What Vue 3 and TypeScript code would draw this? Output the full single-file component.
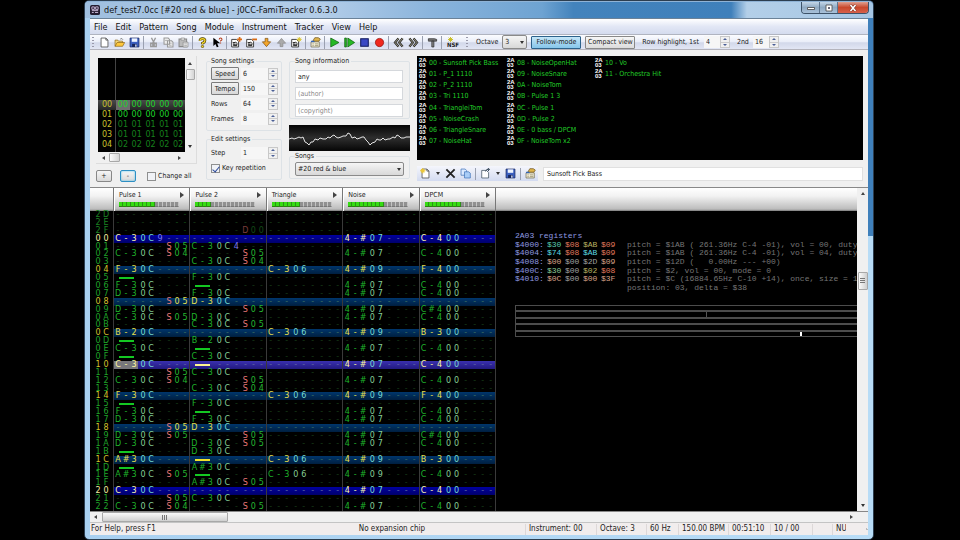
<script setup lang="ts">
import { ref } from 'vue'

interface Cell { note: string; inst: string; vol: string; fx: string }
interface Row { label: string; kind: string; cells: Cell[] }
interface Channel { name: string; level: number; data: Record<string, string> }

const menus = ['File', 'Edit', 'Pattern', 'Song', 'Module', 'Instrument', 'Tracker', 'View', 'Help']

const page = '<path d="M3 1.5h7l3 3v10H3z" fill="#fff" stroke="#333"/><path d="M10 1.5v3h3" fill="none" stroke="#333"/>'
const disk = '<path d="M1.5 1.5h13v13h-13z" fill="#3b5fc0" stroke="#16255c"/><path d="M4 2h8v5H4z" fill="#eef4ff"/><path d="M4.500 10h7v4.500h-7z" fill="#16255c"/><path d="M9 11h2v3H9z" fill="#dde6ff"/>'
const star = '<path d="M12 0v7M8.500 3.500h7M9.500 1l5 5M14.500 1l-5 5" stroke="#d8c020" stroke-width="1.300"/>'
const frame = '<path d="M1 3.500h7l3 3v8H1z" fill="#fff" stroke="#333" stroke-width="1.300"/><path d="M2.500 8h4M3 10.500h6M3 12.500h6" stroke="#222" stroke-width="1.300"/><circle cx="6.500" cy="10" r="2.500" fill="none" stroke="#222"/>'
const props = '<path d="M1.500 7h12v7.500h-12z" fill="#f5f1dc" stroke="#6b6346"/><path d="M4 6h9l2-3-3-2H7z" fill="#e0b54c" stroke="#6b4f14"/><path d="M1.500 6.500h5" stroke="#3567b8" stroke-width="2"/><path d="M3.500 10h2M7 10h5M3.500 12.500h2M7 12.500h5" stroke="#857b55"/>'

const icons: Record<string, string> = {
  new: page,
  open: '<path d="M1.500 13.500v-9h4l1 1.500h6v3" fill="#f4d77a" stroke="#8a6414"/><path d="M1.500 13.500l3-5.500h11l-3 5.500z" fill="#ffc83c" stroke="#8a6414"/><path d="M9 3q3-2 4 1" fill="none" stroke="#555"/>',
  save: disk,
  cut: '<path d="M5 1l4 8M11 1L7 9" stroke="#999" stroke-width="2"/><path d="M4 9h3v5H4zM9 9h3v5H9z" fill="none" stroke="#999" stroke-width="2"/>',
  copy: '<path d="M1.500 1.500h6l2 2v7h-8zM6.500 5.500h6l2 2v7h-8z" fill="#eee" stroke="#999" stroke-width="1.500"/><path d="M3 5h3M8.500 9h4M8.500 12h4" stroke="#999"/>',
  paste: '<path d="M1.500 3h11v11h-11z" fill="#bbb" stroke="#888" stroke-width="1.500"/><path d="M4.500 1.500h5v3h-5z" fill="#eee" stroke="#888"/><path d="M7.500 7.500h7v7h-7z" fill="#eee" stroke="#888"/><path d="M9 10h4M9 12.500h4" stroke="#999"/>',
  help: '<path d="M4.500 5.500Q4 2.500 8 2.500t3.500 3Q11.500 7.500 8 9v1.500" fill="none" stroke="#4a3b00" stroke-width="4"/><path d="M4.500 5.500Q4 2.500 8 2.500t3.500 3Q11.500 7.500 8 9v1.500" fill="none" stroke="#f5d92c" stroke-width="2"/><circle cx="8" cy="13.800" r="1.700" fill="#f5d92c" stroke="#4a3b00"/>',
  what: '<path d="M2 1v12l3-3 2 5 2.500-1-2-5H12z" fill="#000"/><path d="M10.500 3.500q0-2 2-2t2 2q0 1-2 2v1.200M12.500 8v1.300" fill="none" stroke="#b43c1c" stroke-width="1.500"/>',
  addFrame: frame + '<path d="M12.500 0v7M9 3.500h7" stroke="#d96a12" stroke-width="2.400"/>',
  delFrame: frame + '<path d="M9 3.500h7" stroke="#d96a12" stroke-width="2.600"/>',
  down: '<path d="M6 2h4v5h4l-6 7-6-7h4z" fill="#f3a62c" stroke="#7a4a08"/>',
  up: '<path d="M6 14h4V9h4L8 2 2 9h4z" fill="#aaa" stroke="#888"/>',
  dupFrame: frame + star,
  props,
  play: '<path d="M2.500 1.500v13l12-6.500z" fill="#25b825" stroke="#0a5c0a"/>',
  playLoop: '<path d="M1 1.500h2.500v13H1z" fill="#25b825" stroke="#0a5c0a"/><path d="M5.500 1.500v13l10-6.500z" fill="#25b825" stroke="#0a5c0a"/>',
  stop: '<path d="M2.500 2.500h11v11h-11z" fill="#3a48c4" stroke="#111a5c" stroke-width="1.500"/>',
  record: '<circle cx="8" cy="8" r="6" fill="#f0281e" stroke="#8c0c08"/>',
  prev: '<path d="M8 2L3 8l5 6M14 2L9 8l5 6" fill="none" stroke="#222" stroke-width="3.400"/><path d="M8 2L3 8l5 6M14 2L9 8l5 6" fill="none" stroke="#d8d2b0"/>',
  next: '<path d="M2 2l5 6-5 6M8 2l5 6-5 6" fill="none" stroke="#222" stroke-width="3.400"/><path d="M2 2l5 6-5 6M8 2l5 6-5 6" fill="none" stroke="#d8d2b0"/>',
  hammer: '<path d="M2 5V2.500h9l3 1V6H2z" fill="#777" stroke="#222"/><path d="M7 6h3v8.500H7z" fill="#888" stroke="#222"/>',
  newInst: page + '<path d="M4 0v8M0 4h8M1.500 1.500l5 5M6.500 1.500l-5 5" stroke="#ecc83a" stroke-width="1.500"/>',
  remove: '<path d="M2 2l12 12M14 2L2 14" stroke="#222" stroke-width="2.600"/>',
  clone: '<path d="M1.500 1.500h6l2 2v7h-8z" fill="#dceaff" stroke="#3b6fb5"/><path d="M6.500 5.500h6l2.500 2v7H6.500z" fill="#a9cdf7" stroke="#3b6fb5"/>',
  load: '<path d="M2.500 3.500h7l3 3v8h-10z" fill="#fff" stroke="#345"/><path d="M8 5q1-4 5-3M11 0l3 2-3 3" fill="none" stroke="#345" stroke-width="1.400"/>',
}

const toolGroups: string[][] = [
  ['new', 'open', 'save'],
  ['cut', 'copy', 'paste'],
  ['help', 'what'],
  ['addFrame', 'delFrame', 'down', 'up', 'dupFrame'],
  ['props'],
  ['play', 'playLoop', 'stop', 'record'],
  ['prev', 'next'],
  ['hammer'],
]

const frames = [
  ['00', '00'], ['01', '00'], ['02', '01'], ['03', '01'], ['04', '02'],
]

const settings = ref([
  { id: 'speed', label: 'Speed', value: '6', button: true },
  { id: 'tempo', label: 'Tempo', value: '150', button: true },
  { id: 'rows', label: 'Rows', value: '64', button: false },
  { id: 'frames', label: 'Frames', value: '8', button: false },
])
const step = ref('1')
const octave = ref('3')
const highlight1 = ref('4')
const highlight2 = ref('16')
const keyRepeat = ref(true)
const changeAll = ref(false)
const title = ref('any')
const author = ref('')
const copyright = ref('')
const instrumentName = ref('Sunsoft Pick Bass')
const song = ref('#20 red & blue')

const instruments = [
  '00 - Sunsoft Pick Bass', '01 - P_1 1110', '02 - P_2 1110', '03 - Tri 1110',
  '04 - TriangleiTom', '05 - NoiseCrash', '06 - TriangleSnare', '07 - NoiseHat',
  '08 - NoiseOpenHat', '09 - NoiseSnare', '0A - NoiseTom', '0B - Pulse 1 3',
  '0C - Pulse 1', '0D - Pulse 2', '0E - 0 bass / DPCM', '0F - NoiseTom x2',
  '10 - Vo', '11 - Orchestra Hit',
]

// Each entry is note, instrument, volume and effect, separated by blanks; "." leaves a field empty.
const channels: Channel[] = [
  { name: 'Pulse 1', level: 9, data: {
    '00': 'C-3 0C 9 .', '01': '. . . S05', '02': 'C-3 0C . S04', '04': 'F-3 0C . .', '05': '=== . . .',
    '06': 'F-3 0C . .', '07': 'D-3 0C . .', '08': '. . . S05', '09': 'D-3 0C . .', '0A': 'C-3 0C . S05',
    '0C': 'B-2 0C . .', '0D': '=== . . .', '0E': 'C-3 0C . .', '0F': '=== . . .', '10': 'C-3 0C . .',
    '11': '. . . S05', '12': 'C-3 0C . S04', '14': 'F-3 0C . .', '15': '=== . . .', '16': 'F-3 0C . .',
    '17': 'D-3 0C . .', '18': '. . . S05', '19': 'D-3 0C . S05', '1A': 'D-3 0C . .', '1B': '=== . . .',
    '1C': 'A#3 0C . .', '1D': '=== . . .', '1E': 'A#3 0C . S05', '20': 'C-3 0C . .', '21': '. . . S05',
    '22': 'C-3 0C . S04',
  } },
  { name: 'Pulse 2', level: 4, data: {
    '2F': '. . . D00', '01': 'C-3 0C 4 .', '02': '. . . S05', '03': 'C-3 0C . S04', '05': 'F-3 0C . .',
    '06': '=== . . .', '07': 'F-3 0C . .', '08': 'D-3 0C . .', '09': '. . . S05', '0A': 'D-3 0C . .',
    '0B': 'C-3 0C . S05', '0D': 'B-2 0C . .', '0E': '=== . . .', '0F': 'C-3 0C . .', '10': '=== . . .',
    '11': 'C-3 0C . .', '12': '. . . S05', '13': 'C-3 0C . S04', '15': 'F-3 0C . .', '16': '=== . . .',
    '17': 'F-3 0C . .', '18': 'D-3 0C . .', '19': '. . . S05', '1A': 'D-3 0C . S05', '1B': 'D-3 0C . .',
    '1C': '=== . . .', '1D': 'A#3 0C . .', '1E': '=== . . .', '1F': 'A#3 0C . S05', '21': 'C-3 0C . .',
    '22': '. . . S05',
  } },
  { name: 'Triangle', level: 7, data: {
    '04': 'C-3 06 . .', '0C': 'C-3 06 . .', '14': 'C-3 06 . .', '1C': 'C-3 06 . .', '1E': 'C-3 06 . .',
  } },
  { name: 'Noise', level: 9, data: {
    '00': '4-# 07 . .', '02': '4-# 07 . .', '04': '4-# 09 . .', '06': '4-# 07 . .', '07': '4-# 07 . .',
    '09': '4-# 07 . .', '0A': '4-# 07 . .', '0C': '4-# 09 . .', '0E': '4-# 07 . .', '10': '4-# 07 . .',
    '12': '4-# 07 . .', '14': '4-# 09 . .', '16': '4-# 07 . .', '17': '4-# 07 . .', '19': '4-# 07 . .',
    '1A': '4-# 07 . .', '1C': '4-# 09 . .', '1E': '4-# 09 . .', '20': '4-# 07 . .', '22': '4-# 07 . .',
  } },
  { name: 'DPCM', level: 9, data: {
    '00': 'C-4 00 . .', '02': 'C-4 00 . .', '04': 'F-4 00 . .', '06': 'C-4 00 . .', '07': 'C-4 00 . .',
    '09': 'C#4 00 . .', '0A': 'C-4 00 . .', '0C': 'B-3 00 . .', '0E': 'C-4 00 . .', '10': 'C-4 00 . .',
    '12': 'C-4 00 . .', '14': 'F-4 00 . .', '16': 'C-4 00 . .', '17': 'C-4 00 . .', '19': 'C#4 00 . .',
    '1A': 'C-4 00 . .', '1C': 'B-3 00 . .', '1E': 'C-4 00 . .', '20': 'C-4 00 . .', '22': 'C-4 00 . .',
  } },
]

const hex = (n: number): string => n.toString(16).toUpperCase().padStart(2, '0')

function parse(text: string | undefined): Cell {
  const [note, inst, vol, fx] = (text ?? '. . . .').split(' ').map(part => (part === '.' ? '' : part))
  return { note, inst, vol, fx }
}

function makeRow(n: number, previous: boolean): Row {
  const kind = previous ? 'past' : n === 16 ? 'cursor' : n % 16 === 0 ? 'bar' : n % 4 === 0 ? 'beat' : 'plain'
  return { label: hex(n), kind, cells: channels.map(channel => parse(channel.data[hex(n)])) }
}

const rows: Row[] = [
  ...[0x2d, 0x2e, 0x2f].map(n => makeRow(n, true)),
  ...Array.from({ length: 35 }, (_, n) => makeRow(n, false)),
]

const fields: { key: keyof Cell; size: number }[] = [
  { key: 'note', size: 3 }, { key: 'inst', size: 2 }, { key: 'vol', size: 1 }, { key: 'fx', size: 3 },
]

const registers = [
  { name: '$4000:', values: ['$30', '$08', '$AB', '$09'], tones: ['teal', 'red', 'olive', 'red'], info: 'pitch = $1AB ( 261.36Hz C-4 -01), vol = 00, duty = 0' },
  { name: '$4004:', values: ['$74', '$08', '$AB', '$09'], tones: ['cyan', 'red', 'cyan', 'red'], info: 'pitch = $1AB ( 261.36Hz C-4 -01), vol = 04, duty = 1' },
  { name: '$4008:', values: ['$00', '$00', '$2D', '$09'], tones: ['rose', 'gray', 'gray', 'rose'], info: 'pitch = $12D (   0.00Hz --- +00)' },
  { name: '$400C:', values: ['$30', '$00', '$02', '$08'], tones: ['green', 'gray', 'olive', 'red'], info: 'pitch = $2, vol = 00, mode = 0' },
  { name: '$4010:', values: ['$0C', '$00', '$00', '$3F'], tones: ['rose', 'gray', 'rose', 'rose'], info: 'pitch = $C (16884.65Hz C-10 +14), once, size = 1009' },
]

const noteBars = [
  { at: -1, strong: false }, { at: 55.6, strong: false }, { at: -1, strong: false },
  { at: -1, strong: false }, { at: 83.2, strong: true },
]

const status = [
  { text: 'Instrument: 00', size: 'w71' }, { text: 'Octave: 3', size: 'w50' }, { text: '60 Hz', size: 'w32' },
  { text: '150.00 BPM', size: 'w50' }, { text: '00:51:10', size: 'w42' }, { text: '10 / 00', size: 'w42' },
  { text: '', size: 'w20' }, { text: 'NUM', size: 'w14' },
]
</script>

<template>
  <div class="desktop">
    <div class="window">
      <header class="titlebar">
        <svg class="app-icon" viewBox="0 0 16 16" aria-hidden="true">
          <rect width="16" height="16" rx="3" fill="#241c30" />
          <path d="M3 3h4v4H3zM9 3h4v4H9zM3 9h10M3 12h3M8 12h5" fill="none" stroke="#c9b6d6" stroke-width="1.500" />
        </svg>
        <h1>def_test7.0cc [#20 red &amp; blue] - j0CC-FamiTracker 0.6.3.0</h1>
        <div class="caption">
          <button type="button" aria-label="Minimize"><svg viewBox="0 0 12 8"><path d="M2.500 3.500h7v2h-7z" fill="#fff" stroke="#444" stroke-width=".8" /></svg></button>
          <button type="button" aria-label="Maximize"><svg viewBox="0 0 12 8"><path d="M3 1h6v6H3z" fill="#fff" stroke="#444" stroke-width=".8" /><path d="M5 3h2v2H5z" fill="#667" /></svg></button>
          <button type="button" class="close" aria-label="Close"><svg viewBox="0 0 12 8"><path d="M3.500 1l5 6M8.500 1l-5 6" stroke="#5c1a10" stroke-width="2.600" /><path d="M3.500 1l5 6M8.500 1l-5 6" stroke="#fff" stroke-width="1.700" /></svg></button>
        </div>
      </header>

      <div class="client">
        <nav class="menubar">
          <a v-for="item in menus" :key="item" href="#">{{ item }}</a>
        </nav>

        <div class="toolbar">
          <i class="grip"></i>
          <div v-for="(group, g) in toolGroups" :key="g" class="group">
            <button v-for="name in group" :key="name" type="button" class="tool" :aria-label="name">
              <svg viewBox="0 0 16 16" v-html="icons[name]"></svg>
            </button>
          </div>
          <button type="button" class="tool nsf">
            <svg viewBox="0 0 8 8" aria-hidden="true"><path d="M4 0v8M0 4h8M1 1l6 6M7 1L1 7" stroke="#c8bc20" stroke-width="1.500" /></svg>
            <span>NSF</span>
          </button>
          <i class="grip second"></i>
          <label for="octave">Octave</label>
          <span class="pick octave"><select id="octave" v-model="octave"><option>3</option></select><i class="tri down"></i></span>
          <button type="button" class="push active">Follow-mode</button>
          <button type="button" class="push">Compact view</button>
          <label for="hl1" class="hl">Row highlight, 1st</label>
          <span class="spin small"><input id="hl1" v-model="highlight1"><span class="arrows"><button type="button" aria-label="Up"></button><button type="button" aria-label="Down"></button></span></span>
          <label for="hl2" class="hl2">2nd</label>
          <span class="spin small"><input id="hl2" v-model="highlight2"><span class="arrows"><button type="button" aria-label="Up"></button><button type="button" aria-label="Down"></button></span></span>
        </div>

        <section class="panel">
          <div class="frames">
            <div class="frame-box">
              <table class="frame-list">
                <tbody>
                  <tr v-for="(f, i) in frames" :key="f[0]" :class="{ current: i === 0 }">
                    <th scope="row">{{ f[0] }}</th>
                    <td v-for="n in 5" :key="n">{{ f[1] }}</td>
                  </tr>
                </tbody>
              </table>
              <div class="vscroll"><i class="tri up"></i><i class="thumb"></i><i class="tri down"></i></div>
              <div class="hscroll"><i class="tri left"></i><i class="thumb"></i><i class="tri right"></i></div>
            </div>
            <div class="frame-tools">
              <button type="button">+</button>
              <button type="button" class="focus">-</button>
              <label class="check"><input v-model="changeAll" type="checkbox">Change all</label>
            </div>
          </div>

          <div class="settings">
            <fieldset class="song-set">
              <legend>Song settings</legend>
              <div v-for="s in settings" :key="s.id" class="setting">
                <button v-if="s.button" type="button" class="name">{{ s.label }}</button>
                <label v-else :for="s.id">{{ s.label }}</label>
                <span class="spin"><input :id="s.id" v-model="s.value" :aria-label="s.label"><span class="arrows"><button type="button" aria-label="Up"></button><button type="button" aria-label="Down"></button></span></span>
              </div>
            </fieldset>
            <fieldset class="edit-set">
              <legend>Edit settings</legend>
              <div class="setting">
                <label for="step">Step</label>
                <span class="spin"><input id="step" v-model="step"><span class="arrows"><button type="button" aria-label="Up"></button><button type="button" aria-label="Down"></button></span></span>
              </div>
              <label class="check"><input v-model="keyRepeat" type="checkbox">Key repetition</label>
            </fieldset>
          </div>

          <div class="info">
            <fieldset class="info-set">
              <legend>Song information</legend>
              <input v-model="title" aria-label="Title">
              <input v-model="author" aria-label="Author" placeholder="(author)">
              <input v-model="copyright" aria-label="Copyright" placeholder="(copyright)">
            </fieldset>
            <svg class="scope" viewBox="0 0 121 26" preserveAspectRatio="none" aria-hidden="true">
              <polyline
                fill="none" stroke="#e4e4e4" stroke-width="1"
                points="0,14 3,13 5,14 8,13 10,12 12,13 14,12 16,17 18,18 20,20 22,17 24,17 26,14 29,15 31,13 34,14 37,14 39,12 41,13 43,11 45,10 47,12 49,13 52,12 54,11 57,11 59,8 61,9 63,13 66,12 68,14 71,13 73,12 75,12 77,15 79,17 81,20 83,18 86,17 88,14 90,15 92,15 94,13 96,15 99,14 101,14 104,12 106,13 108,10 110,11 112,13 115,13 117,12 121,12"
              />
            </svg>
            <fieldset class="songs-set">
              <legend>Songs</legend>
              <span class="pick"><select v-model="song" aria-label="Songs"><option>#20 red &amp; blue</option></select><i class="tri down"></i></span>
            </fieldset>
          </div>

          <div class="instruments">
            <ul>
              <li v-for="name in instruments" :key="name"><i class="chip"><b>2A</b><b>03</b></i>{{ name }}</li>
            </ul>
            <div class="inst-row">
              <div class="inst-tools">
                <button type="button" class="tool" aria-label="New instrument"><svg viewBox="0 0 16 16" v-html="icons.newInst"></svg></button>
                <button type="button" class="drop" aria-label="New options"><i class="tri down"></i></button>
                <button type="button" class="tool" aria-label="Remove"><svg viewBox="0 0 16 16" v-html="icons.remove"></svg></button>
                <button type="button" class="tool" aria-label="Clone"><svg viewBox="0 0 16 16" v-html="icons.clone"></svg></button>
                <i class="sep"></i>
                <button type="button" class="tool" aria-label="Load"><svg viewBox="0 0 16 16" v-html="icons.load"></svg></button>
                <button type="button" class="drop" aria-label="Load options"><i class="tri down"></i></button>
                <button type="button" class="tool" aria-label="Save"><svg viewBox="0 0 16 16" v-html="icons.save"></svg></button>
                <i class="sep"></i>
                <button type="button" class="tool" aria-label="Edit"><svg viewBox="0 0 16 16" v-html="icons.props"></svg></button>
              </div>
              <input v-model="instrumentName" aria-label="Instrument name">
            </div>
          </div>
        </section>

        <main class="editor">
          <div class="board">
            <div class="heads">
              <div class="channels">
                <i class="corner"></i>
                <div v-for="c in channels" :key="c.name" class="head">
                  <span class="head-name">{{ c.name }}<i class="tri right"></i></span>
                  <span class="meter"><i v-for="n in 15" :key="n" :class="{ on: n <= c.level }"></i></span>
                </div>
              </div>
            </div>
            <div class="body">
              <table class="pattern">
                <tbody>
                  <tr v-for="(row, r) in rows" :key="r" :class="row.kind">
                    <th scope="row"><span v-for="(ch, i) in row.label" :key="i">{{ ch }}</span></th>
                    <td v-for="(cell, c) in row.cells" :key="c">
                      <template v-for="f in fields" :key="f.key">
                        <span v-if="cell[f.key] === '==='" class="note"><i class="release"></i></span>
                        <span v-else :class="[f.key, { empty: !cell[f.key], selected: row.kind === 'cursor' && c === 0 && f.key === 'note' }]">
                          <b v-for="(ch, i) in (cell[f.key] || '-'.repeat(f.size))" :key="i">{{ ch }}</b>
                        </span>
                      </template>
                    </td>
                  </tr>
                </tbody>
              </table>
              <div class="regs">
                <div class="reg-list">
                  <p class="reg-title">2A03 registers</p>
                  <p v-for="reg in registers" :key="reg.name">
                    <span class="addr">{{ reg.name }}</span>
                    <span v-for="(v, i) in reg.values" :key="i" class="val" :class="reg.tones[i]">{{ v }}</span>
                    <span class="desc">{{ reg.info }}</span>
                  </p>
                  <p><span class="addr"></span><span v-for="n in 4" :key="n" class="val"></span><span class="desc">position: 03, delta = $38</span></p>
                </div>
                <div class="bars">
                  <div v-for="(bar, i) in noteBars" :key="i">
                    <i v-if="bar.at >= 0" :class="{ strong: bar.strong }" :style="{ left: bar.at + '%' }"></i>
                  </div>
                </div>
              </div>
            </div>
          </div>
          <div class="vscroll main"><i class="tri up"></i><i class="thumb"></i><i class="tri down"></i></div>
        </main>
        <div class="hscroll main"><i class="tri left"></i><i class="thumb"></i><i class="tri right"></i></div>

        <footer class="status">
          <span class="hint">For Help, press F1</span>
          <span class="chipinfo">No expansion chip</span>
          <span v-for="(s, i) in status" :key="i" class="part" :class="s.size">{{ s.text }}</span>
          <i class="resize"></i>
        </footer>
      </div>
    </div>
  </div>
</template>

<style>
body { background: #000; }
</style>

<style scoped>
* { box-sizing: border-box; }
.desktop {
  display: flex; height: 100vh; padding: 0 86px 0 84px; background: #000;
  font-family: "DejaVu Sans Condensed", "Noto Sans", sans-serif; font-size: 7px; line-height: 10px; color: #1c1c1c;
}
button, input, select { font: inherit; color: inherit; margin: 0; padding: 0; }
i, b { font-style: normal; font-weight: normal; }
p, h1, ul { margin: 0; padding: 0; list-style: none; font-weight: normal; }
.window {
  flex: 1; min-width: 0; display: flex; flex-direction: column; padding: 0 5px 4px;
  border: 1px solid #2c3e50; border-radius: 5px;
  background: linear-gradient(90deg, transparent 50%, #3f80bb 50%) top / 100% 235px no-repeat, linear-gradient(90deg, #a9d0f0, #b8dcf6);
}
.titlebar {
  display: flex; align-items: center; flex: none; height: 17px; margin: 0 -5px; padding-left: 5px;
  border-radius: 4px 4px 0 0; border-top: 1px solid #8fb3d6;
  background: linear-gradient(90deg, #9fbfdf 0, #b3cde8 30%, #8ab4dc 44%, #6ea3d2 58%, #4383bc 62%, #3f80bb 82%, #b3cfe8 84%, #a6c6e4 100%);
}
.app-icon { width: 10px; height: 10px; margin-right: 4px; }
h1 { flex: 1; font-size: 9px; line-height: 14px; color: #111; white-space: nowrap; }
.caption { display: flex; align-self: flex-start; height: 12px; margin-right: 4px; border: 1px solid #3d5268; border-top: 0; border-radius: 0 0 4px 4px; overflow: hidden; }
.caption button { display: flex; align-items: center; justify-content: center; width: 18px; border: 0; border-right: 1px solid #5d7690; background: linear-gradient(#c3d6e8, #8fa9c2 50%, #a9c2da); }
.caption .close { width: 30px; border-right: 0; background: linear-gradient(#e0a090, #c8482c 50%, #d8604a); }
.caption svg { width: 12px; height: 8px; }
.client { flex: 1; min-height: 0; display: flex; flex-direction: column; background: #f0f0f0; border-top: 1px solid #6b8298; }
.menubar { display: flex; gap: 8px; flex: none; height: 15px; padding: 0 4px; align-items: center; font-size: 9px; background: linear-gradient(#fff, #e2e7f5 50%, #d4dbee); }
.menubar a { color: #111; text-decoration: none; }
.toolbar { display: flex; align-items: center; flex: none; height: 16px; padding-left: 2px; white-space: nowrap; border-top: 1px solid #b0b4c0; border-bottom: 1px solid #b4b4bc; background: linear-gradient(#fbfcff, #e9edf8 50%, #d2d8ea 55%, #e2e6f4); }
.grip { width: 2px; height: 11px; margin-right: 3px; background: repeating-linear-gradient(#99a 0 1px, transparent 1px 3px); }
.grip.second { margin: 0 8px 0 4px; }
.group { display: flex; padding-right: 1px; margin-right: 2px; border-right: 1px solid #9aa0b0; }
.tool { display: flex; align-items: center; justify-content: center; width: 15px; height: 13px; border: 0; background: none; }
.tool svg { width: 11px; height: 11px; }
.nsf { flex-direction: column; width: 18px; line-height: 6px; font-size: 6px; font-weight: bold; }
.nsf svg { width: 5px; height: 5px; margin-right: 6px; }
.pick { position: relative; display: block; }
.pick select { display: block; width: 100%; height: 14px; appearance: none; border: 1px solid #8a8a8a; border-radius: 2px; padding: 0 2px; line-height: 10px; background: linear-gradient(#f5f5f5, #d8d8d8); }
.pick .tri { position: absolute; right: 3px; top: 6px; pointer-events: none; }
.pick.octave { width: 25px; margin: 0 4px; }
.push { width: 50px; height: 13px; margin-right: 4px; border: 1px solid #888; border-radius: 1px; background: linear-gradient(#f6f6f6, #dcdcdc); }
.push.active { border-color: #2c628b; background: linear-gradient(#c5e6f8, #86c6ea); }
.hl { margin: 0 5px 0 3px; }
.hl2 { margin: 0 4px 0 7px; }
.spin { display: flex; width: 37px; height: 12px; }
.spin input { flex: 1; min-width: 0; width: 0; padding-left: 2px; border: 0; background: #f6f6f6; }
.spin.small { width: 26px; }
.arrows { display: flex; flex-direction: column; width: 10px; border: 1px solid #c8c8c8; }
.arrows button { display: flex; flex: 1; align-items: center; justify-content: center; border: 0; background: #f0f0f0; }
.arrows button::before { content: ""; border: 2px solid transparent; border-top: 0; border-bottom-color: #4a5f96; }
.arrows button + button { border-top: 1px solid #ccc; }
.arrows button + button::before { border-top: 2px solid #4a5f96; border-bottom: 0; }

.panel { display: flex; flex: none; height: 137px; padding: 6px 5px 0 6px; }
.frames { width: 101px; margin-right: 9px; }
.frame-box { display: grid; grid-template: 94px 11px / 1fr 10px; padding: 2px 1px 0 2px; margin-bottom: 6px; border-right: 1px solid #ddd; border-bottom: 1px solid #ddd; }
.frame-list { display: flex; flex-direction: column; justify-content: flex-end; padding-bottom: 2px; background: linear-gradient(#444, #444) 17px 0 / 1px 100% no-repeat, #000; font-family: "DejaVu Sans", sans-serif; font-size: 8px; line-height: 10px; color: #16811c; }
.frame-list tbody { display: block; }
.frame-list tr { display: grid; grid-template-columns: 18px repeat(5, 1fr); }
.frame-list tr.current { background: linear-gradient(#4a4a4a, #262626); }
.frame-list tr.current td, .frame-list tr:nth-child(2) td { color: #1ed42a; }
.frame-list tr.current td:nth-child(2) { background: #6d6d6d; }
.frame-list th, .frame-list td { padding: 0; font-weight: normal; text-align: center; }
.frame-list th { color: #c8c02c; }
.vscroll, .hscroll { display: flex; align-items: center; justify-content: space-between; background: #f0f0f0; }
.vscroll { flex-direction: column; padding: 4px 0; }
.vscroll .thumb { width: 9px; height: 11px; margin-bottom: auto; margin-top: 4px; }
.hscroll { padding: 0 4px; grid-column: 1; }
.hscroll .thumb { width: 11px; height: 9px; margin-right: auto; margin-left: 4px; }
.thumb { border: 1px solid #a8a8a8; border-radius: 1px; background: linear-gradient(90deg, #fafafa, #d4d4d4); }
.tri { display: block; width: 0; height: 0; border: 2px solid transparent; }
.tri.up { border-bottom: 3px solid #444; border-top: 0; }
.tri.down { border-top: 3px solid #333; border-bottom: 0; }
.tri.left { border-right: 3px solid #444; border-left: 0; }
.tri.right { border-left: 3px solid #444; border-right: 0; }
.frame-tools { display: flex; align-items: center; gap: 8px; }
.frame-tools button { width: 16px; height: 12px; border: 1px solid #888; border-radius: 2px; background: linear-gradient(#f6f6f6, #d9d9d9); }
.frame-tools .focus { border-color: #2d8fc4; box-shadow: inset 0 0 2px #49c0f0; }
.check { display: flex; align-items: center; gap: 2px; white-space: nowrap; }
.frame-tools .check { margin-left: 3px; }
.check input { display: flex; align-items: center; justify-content: center; appearance: none; width: 9px; height: 9px; border: 1px solid #8e8f8f; background: #f0f2f6; }
.check input:checked::before { content: ""; width: 3px; height: 6px; border: solid #2b4a9a; border-width: 0 1px 1px 0; transform: rotate(40deg); }

fieldset { min-width: 0; margin: 0; border: 1px solid #dde2e6; border-radius: 2px; padding: 0 4px; }
legend { padding: 0 2px 0 0; line-height: 10px; }
.settings { width: 76px; margin-right: 7px; }
.song-set { height: 75px; margin-bottom: 3px; }
.setting { display: flex; align-items: center; justify-content: space-between; height: 15px; margin-right: -1px; }
.setting .name { width: 28px; height: 13px; border: 1px solid #7c7c7c; border-radius: 1px; background: linear-gradient(#f2f2f2, #d8d8d8); }
.edit-set { height: 46px; }
.edit-set .setting { height: 18px; }
.edit-set .check { margin-top: 1px; }
.info { width: 121px; margin-right: 7px; }
.info-set { height: 63px; margin-bottom: 6px; padding: 4px 6px 0 5px; }
.info-set input { display: block; width: 100%; height: 13px; margin-bottom: 4px; padding: 0 2px; border: 1px solid #d5d8dc; background: #fff; }
.info-set input::placeholder { color: #8a8a8a; opacity: 1; }
.scope { display: block; width: 100%; height: 26px; background: linear-gradient(#050505, #2e2e2e 50%, #050505); }
.songs-set { height: 28px; padding: 1px 5px 0; }

.instruments { flex: 1; min-width: 0; }
.instruments ul { display: grid; grid-auto-flow: column; grid-template-rows: repeat(8, 1fr); grid-auto-columns: 88px; height: 104px; padding: 1px 1px 13px 2px; background: #000; color: #20cc28; white-space: nowrap; }
.instruments li { display: flex; align-items: center; gap: 2px; }
.chip { display: flex; flex-direction: column; width: 8px; font: bold 6px/5px "Liberation Sans", sans-serif; color: #fff; }
.chip b { font-weight: bold; }
.inst-row { display: flex; gap: 5px; align-items: center; margin-top: 6px; }
.inst-tools { display: flex; align-items: center; height: 15px; width: 121px; padding-left: 1px; background: linear-gradient(#f5f6fc, #d3dbf0); }
.drop { display: flex; align-items: center; justify-content: center; width: 11px; height: 13px; border: 0; background: none; }
.sep { width: 1px; height: 12px; margin: 0 2px; background: #9aa0b0; }
.inst-row input { flex: 1; min-width: 0; height: 14px; padding-left: 3px; border: 1px solid #e0e0e0; background: #fff; }

.editor { flex: 1; min-height: 0; display: flex; border-top: 1px solid #888; }
.board { flex: 1; min-width: 0; display: flex; flex-direction: column; background: #000; overflow: hidden; }
.heads { flex: none; height: 23px; background: linear-gradient(#fff 0, #f2f2f2 35%, #bcbcbc 92%, #777); }
.channels, .pattern { width: 406px; }
.channels, .pattern tr { display: grid; grid-template-columns: 24px repeat(5, 1fr); }
.channels { height: 100%; }
.corner, .head { border-right: 1px solid #777; }
.head { display: flex; flex-direction: column; padding: 2px 5px 0 4px; gap: 2px; border-left: 1px solid #fff; }
.head-name { display: flex; justify-content: space-between; align-items: center; }
.head .tri.right { border-width: 3px 0 3px 4px; }
.meter { display: flex; height: 5px; width: 60px; }
.meter i { flex: 1; border-right: 1px solid #c4c4c4; border-bottom: 1px solid #777; background: #909090; }
.meter i.on { border-right-color: #2c9018; border-bottom-color: #2c8010; background: #35dc12; }
.body { flex: 1; min-height: 0; display: flex; }
.pattern { flex: none; display: flex; font-family: "DejaVu Sans", sans-serif; font-size: 8px; line-height: 8px; color: #1fb42b; }
.pattern tbody { flex: 1; display: flex; flex-direction: column; min-width: 0; }
.pattern tr { flex: 1; min-height: 0; align-items: stretch; }
.pattern th, .pattern td { display: flex; padding: 0; font-weight: normal; align-items: center; }
.pattern th { justify-content: flex-end; padding-right: 3px; border-right: 1px solid #3a3a3a; color: #1fa329; }
.pattern th span { width: 8px; text-align: center; }
.pattern td { gap: 1px; border-right: 1px solid #3a3a3a; }
.pattern td > span { display: flex; height: 100%; align-items: center; }
.pattern b { width: 8px; text-align: center; }
.release { width: 15px; height: 2px; margin-left: 5px; background: #14c822; }
.pattern td > .note { width: 24px; }
.inst { color: #86cf96; }
.vol { color: #7b7bf0; }
.fx { color: #25b830; }
.fx b:first-child { color: #e87878; }
.empty, .fx.empty b:first-child { color: #173a19; }
.past th { color: #1a8222; }
.past .fx { color: #124a16; }
.past .fx:not(.empty) b:first-child { color: #7a3c3c; }
.beat td { background: linear-gradient(#00366c, #001f40); color: #e6e050; }
.bar td { background: linear-gradient(#0000a0, #00006c); color: #fdf8b0; }
.cursor td { background: linear-gradient(#3a30b0, #221a80); color: #fdf8a0; }
.beat th, .cursor th { color: #d4c22c; }
.bar th { color: #f3eea0; }
.beat .inst, .bar .inst, .cursor .inst { color: #78dcd0; }
.beat .fx { color: #e6e050; }
.beat .empty, .beat .fx.empty b:first-child { color: #3a6a60; }
.bar .empty, .bar .fx.empty b:first-child, .cursor .empty, .cursor .fx.empty b:first-child { color: #5c64a0; }
.beat .release { background: #f0e42c; }
.cursor .release { background: #fdf490; }
.cursor .selected { background: #77777c; }

.regs { flex: 1; min-width: 0; padding: 21px 0 0 19px; font: 8px/8px "Liberation Mono", monospace; white-space: pre; overflow: hidden; }
.reg-list { display: grid; grid-template-rows: repeat(7, 1fr); height: 60px; margin-bottom: 13px; }
.reg-list p { display: flex; align-items: center; }
.addr { flex: none; width: 32px; }
.addr, .reg-title { color: #8f9ae0; }
.val { flex: none; width: 18px; }
.desc { margin-left: 8px; color: #757575; }
.teal { color: #58c8b0; } .red { color: #e0785c; } .olive { color: #b8b060; } .cyan { color: #5cd8e0; }
.rose { color: #d8a088; } .gray { color: #a0a0a0; } .green { color: #88c898; }
.bars { display: flex; flex-direction: column; height: 32px; }
.bars div { position: relative; flex: 1; border: 1px solid #4c4c4c; border-right: 0; }
.bars i { position: absolute; top: 0; bottom: 0; width: 1px; background: #555; }
.bars i.strong { width: 2px; background: #fff; }
.vscroll.main { width: 11px; }
.vscroll.main .thumb { width: 10px; height: 18px; margin: 77px 0 auto; background: repeating-linear-gradient(#777 0 1px, transparent 1px 2px) center / 5px 6px no-repeat, linear-gradient(90deg, #fafafa, #cfcfcf); }
.hscroll.main { flex: none; height: 11px; padding-right: 15px; border-top: 1px solid #888; }
.hscroll.main .thumb { width: 126px; height: 10px; margin-left: 5px; background: repeating-linear-gradient(90deg, #777 0 1px, transparent 1px 2px) center / 6px 5px no-repeat, linear-gradient(#fafafa, #d0d0d0); }

.status { display: flex; align-items: center; flex: none; height: 13px; border-top: 1px solid #c4c4c4; font-size: 8px; white-space: nowrap; background: #f1eded; overflow: hidden; }
.hint { flex: 269; padding-left: 1px; }
.chipinfo { flex: 167; }
.part { flex: none; height: 11px; padding-left: 3px; border-left: 1px solid #ddd8d8; overflow: hidden; }
.w71 { width: 71px; } .w50 { width: 50px; } .w32 { width: 32px; } .w42 { width: 42px; } .w20 { width: 20px; } .w14 { width: 14px; }
.resize { width: 22px; height: 8px; background: radial-gradient(#bbb 1px, transparent 1px) right / 3px 3px no-repeat; }
</style>
